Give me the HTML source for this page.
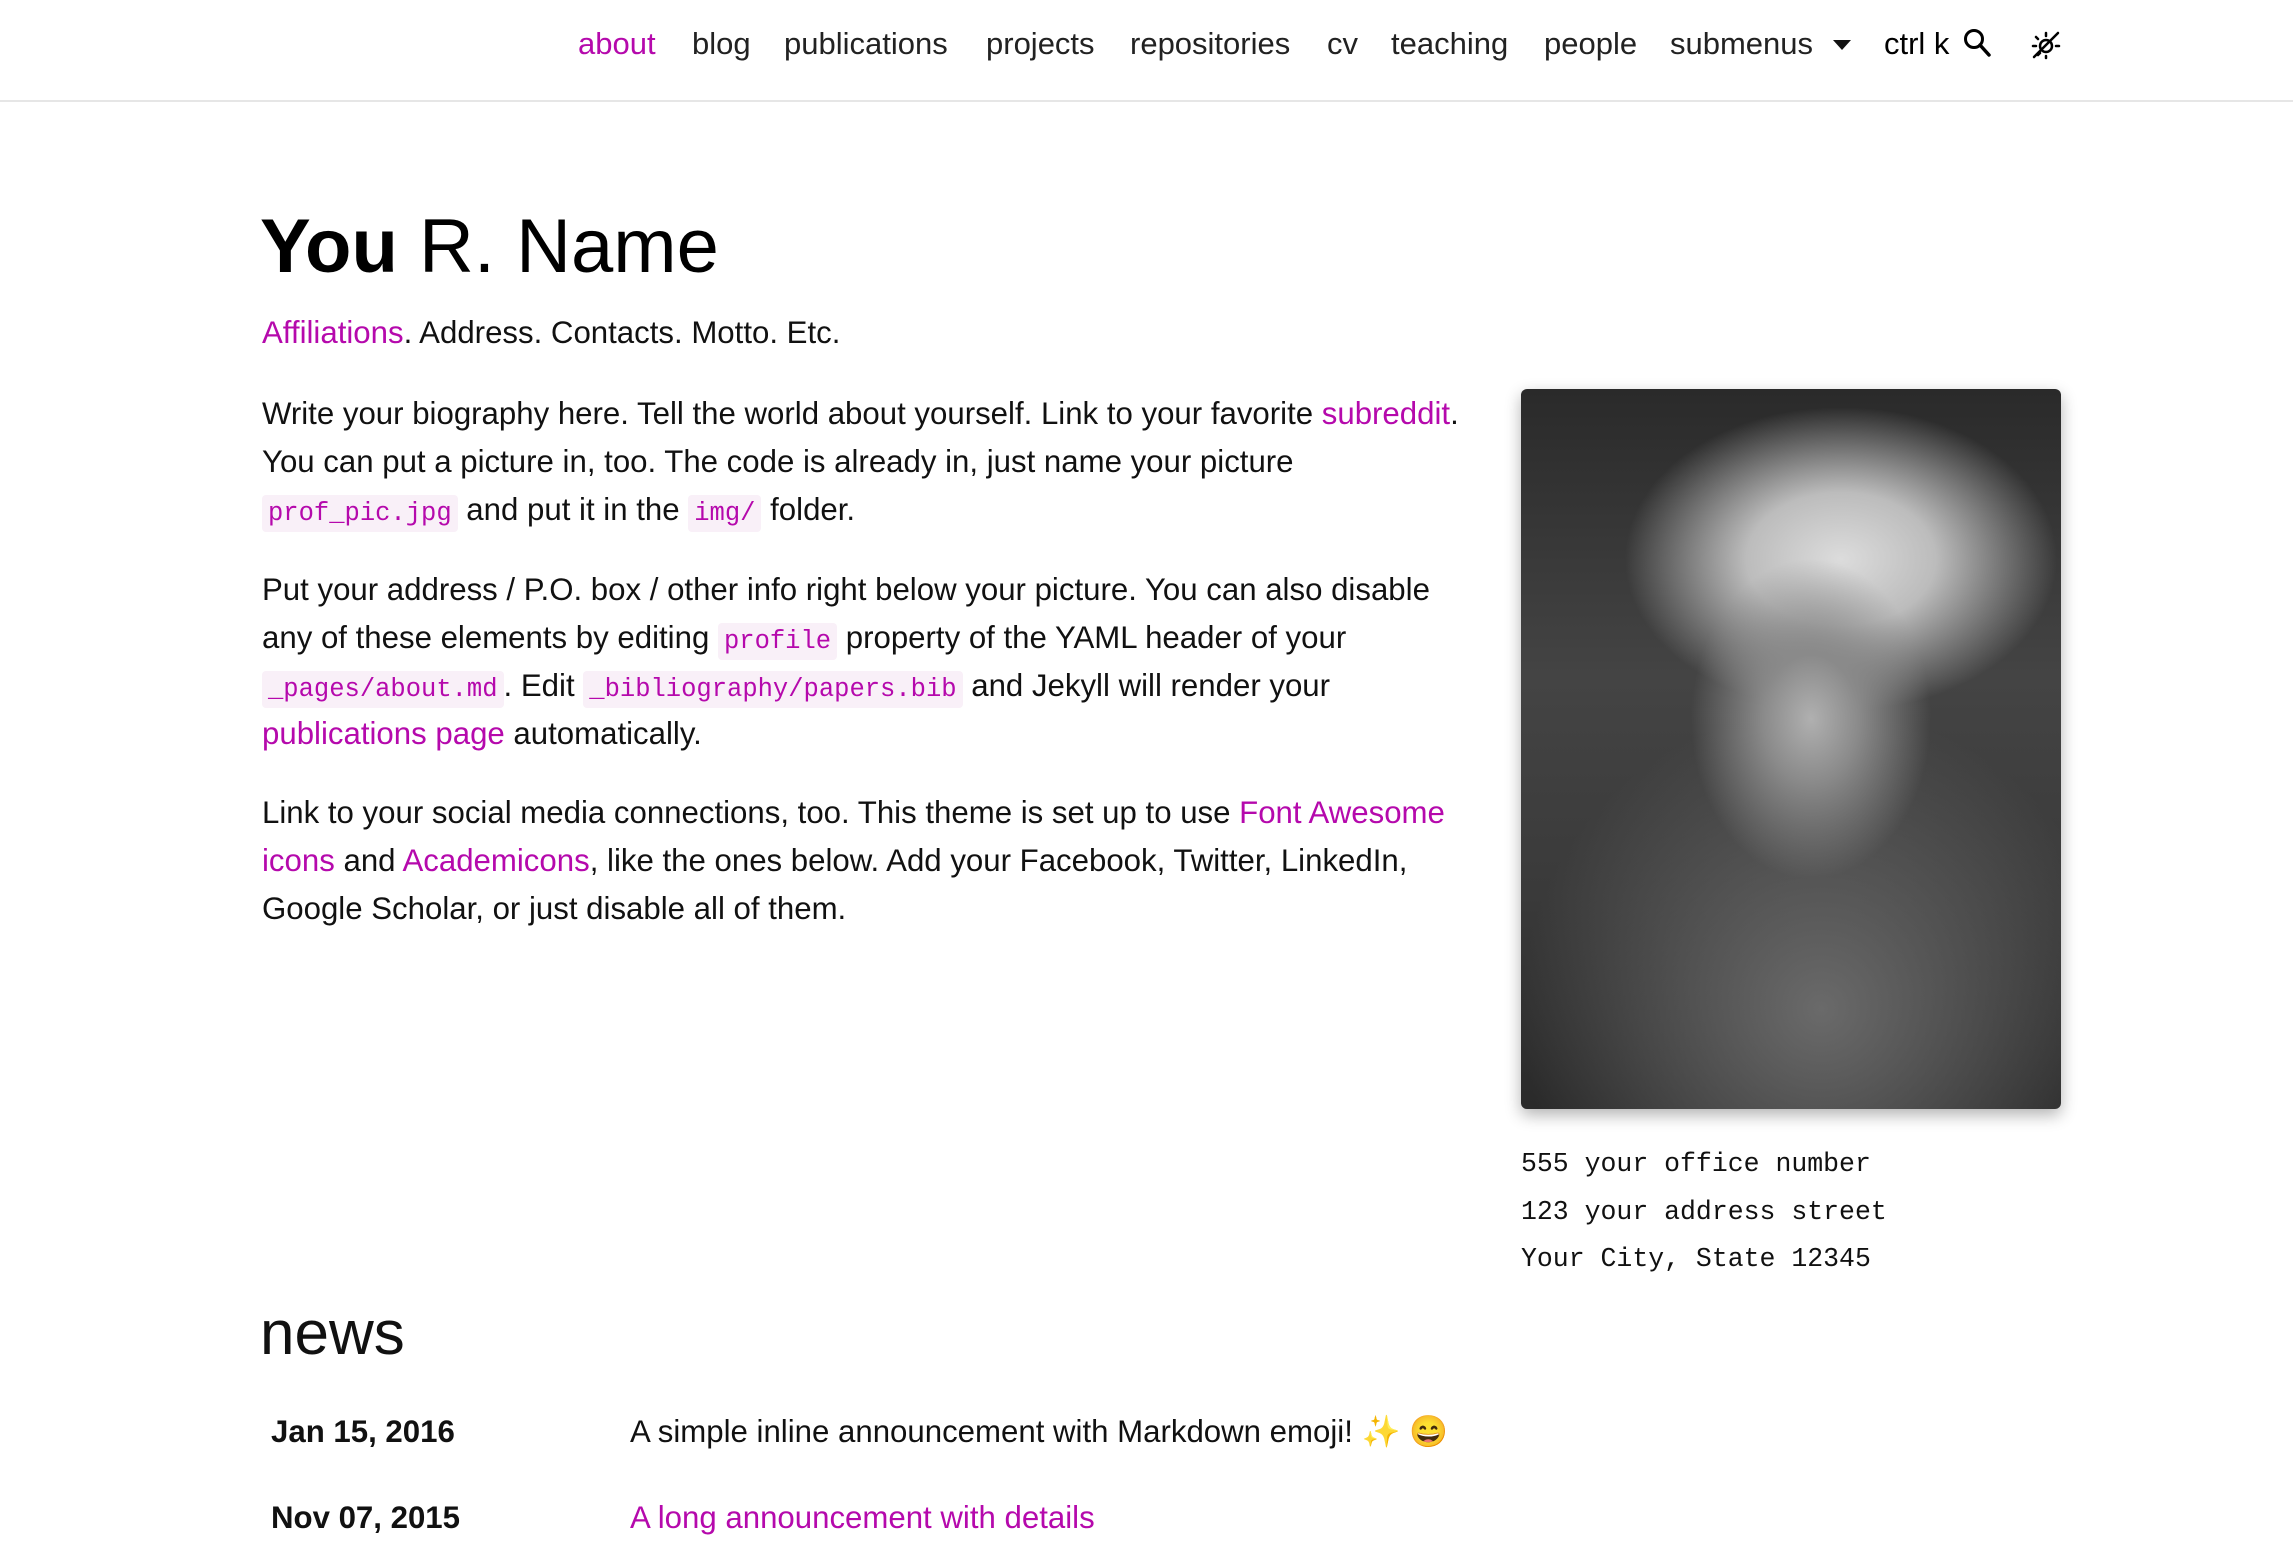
<!DOCTYPE html>
<html><head><meta charset="utf-8"><style>
html,body{margin:0;padding:0;background:#fff;width:2293px;height:1561px;overflow:hidden;position:relative;font-family:"Liberation Sans",sans-serif;color:#000}
.nav{position:absolute;left:0;top:0;width:2293px;height:100px;border-bottom:2px solid #e6e6e6}
.ni{position:absolute;top:26px;font-size:31px;color:#222;white-space:nowrap}
.t{position:absolute;white-space:nowrap;font-size:31.2px;line-height:48px;color:#111}
.p{color:#b509ac !important}
code{font-family:"Liberation Mono",monospace;font-size:25.5px;line-height:1;color:#b509ac;background:#f9f0f8;padding:4px 6px;border-radius:4px}
.addr{position:absolute;left:1521px;font-family:"Liberation Mono",monospace;font-size:26.5px;color:#111;white-space:nowrap}
</style></head><body>
<div class="nav">
<span class="ni p" style="left:578px">about</span>
<span class="ni" style="left:692px">blog</span>
<span class="ni" style="left:784px">publications</span>
<span class="ni" style="left:986px">projects</span>
<span class="ni" style="left:1130px">repositories</span>
<span class="ni" style="left:1327px">cv</span>
<span class="ni" style="left:1391px">teaching</span>
<span class="ni" style="left:1544px">people</span>
<span class="ni" style="left:1670px">submenus</span>
<svg style="position:absolute;left:1833px;top:40px" width="18" height="10"><path d="M0 0H18L9 10Z" fill="#111"/></svg>
<span class="ni" style="left:1884px;color:#000">ctrl k</span>
<svg style="position:absolute;left:1963px;top:28px" width="28" height="30" viewBox="0 0 28 30"><circle cx="11" cy="11" r="8.5" fill="none" stroke="#000" stroke-width="3"/><path d="M17 17L26 27" stroke="#000" stroke-width="3.5" stroke-linecap="round"/></svg>
<svg style="position:absolute;left:2030px;top:29px" width="32" height="32" viewBox="0 0 32 32" fill="none" stroke="#000" stroke-width="2.5" stroke-linecap="round"><path d="M4 28L28 4"/><circle cx="16" cy="17" r="6"/><path d="M16 4v3M6 8l2 2M3 17h3M26 17h3M8 26l2-2M16 27v2"/></svg>
</div>

<div style="position:absolute;left:260px;top:203px;font-size:76px;white-space:nowrap;color:#000"><b>You</b> R. Name</div>
<div class="t" style="left:262px;top:309px"><span class="p">Affiliations</span>. Address. Contacts. Motto. Etc.</div>

<div class="t" style="left:262px;top:390px">Write your biography here. Tell the world about yourself. Link to your favorite <span class="p">subreddit</span>.<br>You can put a picture in, too. The code is already in, just name your picture<br><code>prof_pic.jpg</code> and put it in the <code>img/</code> folder.</div>

<div class="t" style="left:262px;top:566px">Put your address / P.O. box / other info right below your picture. You can also disable<br>any of these elements by editing <code>profile</code> property of the YAML header of your<br><code>_pages/about.md</code>. Edit <code>_bibliography/papers.bib</code> and Jekyll will render your<br><span class="p">publications page</span> automatically.</div>

<div class="t" style="left:262px;top:789px">Link to your social media connections, too. This theme is set up to use <span class="p">Font Awesome</span><br><span class="p">icons</span> and <span class="p">Academicons</span>, like the ones below. Add your Facebook, Twitter, LinkedIn,<br>Google Scholar, or just disable all of them.</div>

<div style="position:absolute;left:1521px;top:389px;width:540px;height:720px;border-radius:6px;box-shadow:0 6px 16px rgba(0,0,0,.3);overflow:hidden;background:
radial-gradient(ellipse 120px 160px at 290px 330px,#b0b0b0 0%,#8a8a8a 40%,rgba(90,90,90,0) 100%),
radial-gradient(ellipse 270px 190px at 320px 170px,#dcdcdc 0%,#bcbcbc 35%,rgba(120,120,120,0) 80%),
radial-gradient(ellipse 300px 300px at 300px 620px,#6a6a6a 0%,rgba(70,70,70,0) 100%),
linear-gradient(180deg,#2a2a2a 0%,#444 40%,#3a3a3a 70%,#2a2a2a 100%)"></div>

<div class="addr" style="top:1149px">555 your office number</div>
<div class="addr" style="top:1197px">123 your address street</div>
<div class="addr" style="top:1244px">Your City, State 12345</div>

<div style="position:absolute;left:260px;top:1298px;font-size:62px;color:#111">news</div>
<div class="t" style="left:271px;top:1408px;font-weight:bold">Jan 15, 2016</div>
<div class="t" style="left:630px;top:1408px">A simple inline announcement with Markdown emoji! <span style="color:#f0c020">✨</span> 😄</div>
<div class="t" style="left:271px;top:1494px;font-weight:bold">Nov 07, 2015</div>
<div class="t p" style="left:630px;top:1494px">A long announcement with details</div>
</body></html>
